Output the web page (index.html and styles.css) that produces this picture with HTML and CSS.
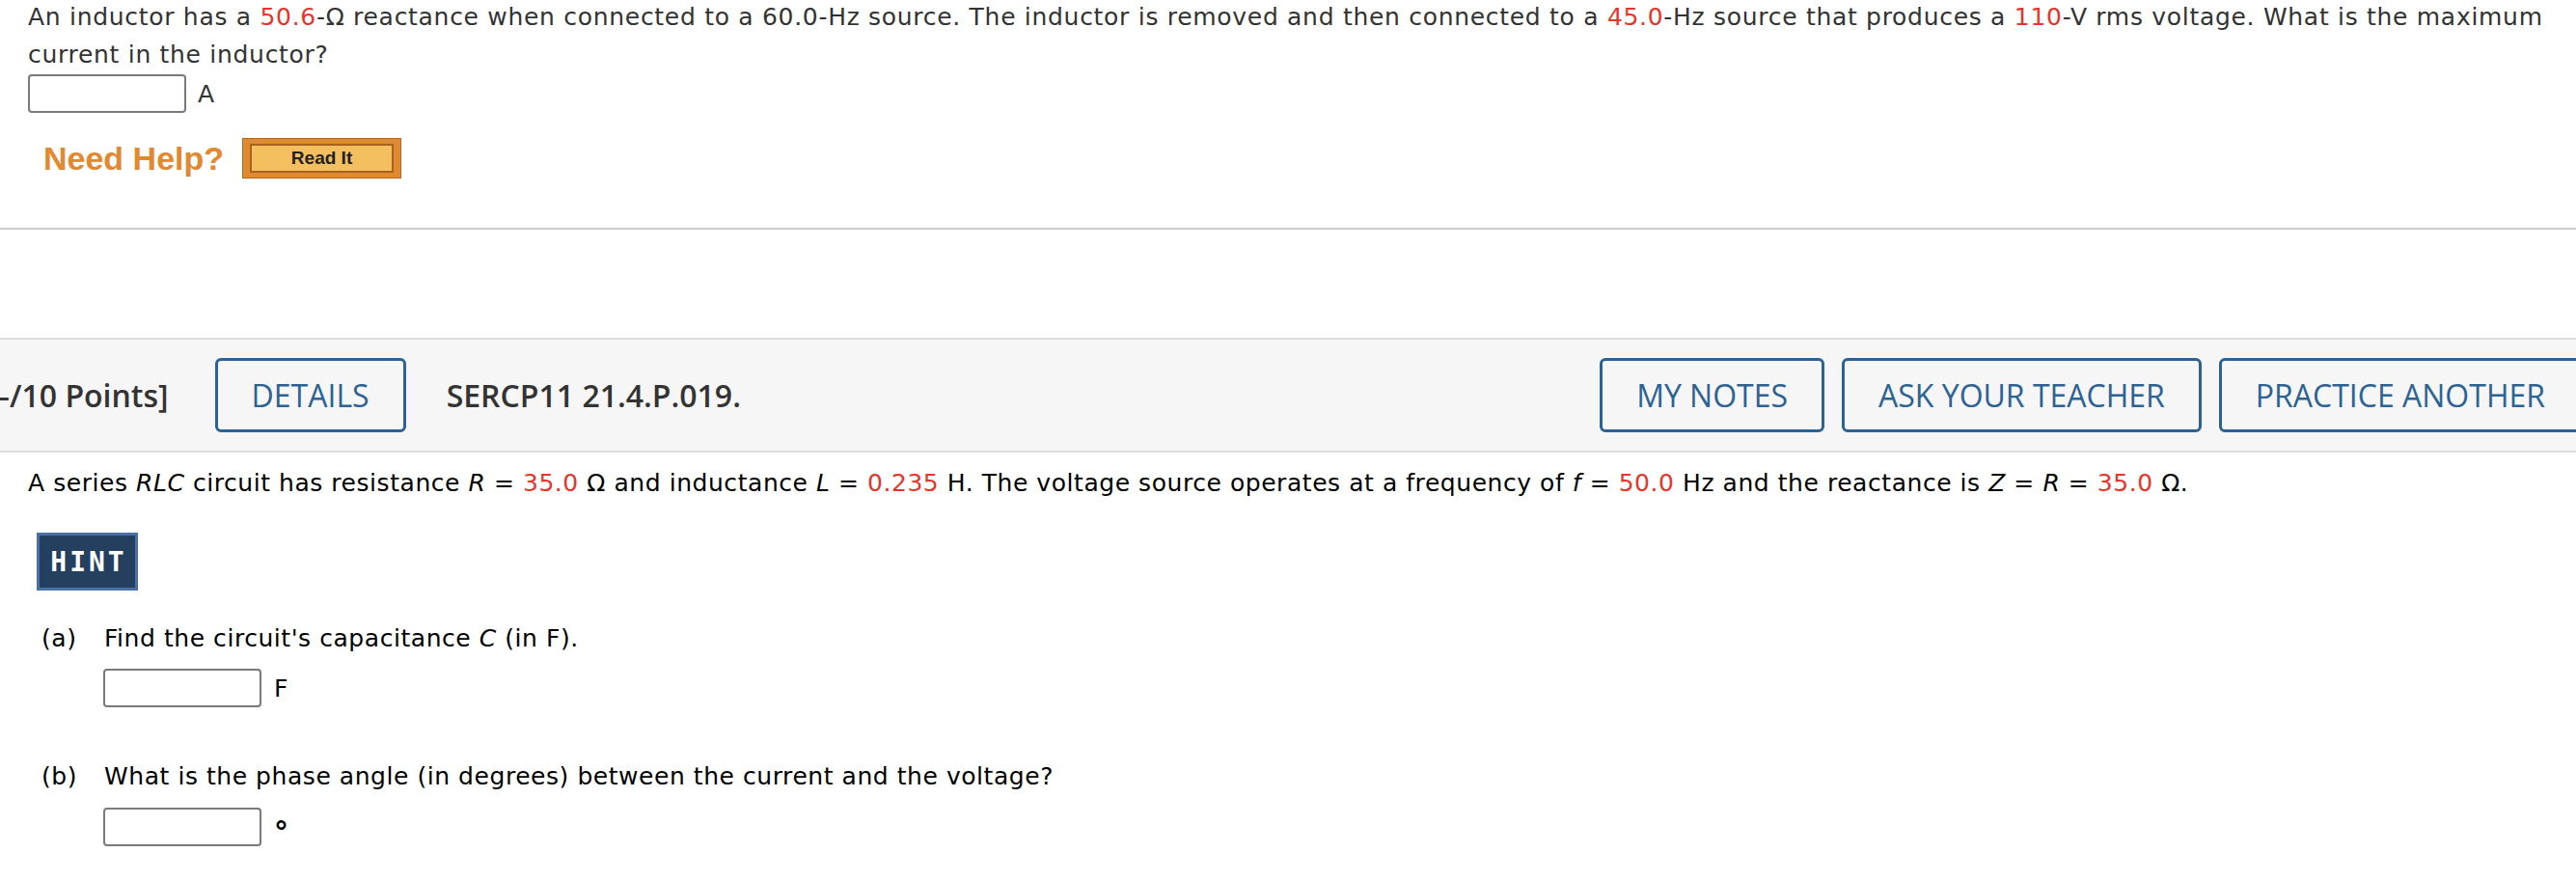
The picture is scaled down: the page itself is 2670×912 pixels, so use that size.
FILE: index.html
```html
<!DOCTYPE html>
<html>
<head>
<meta charset="utf-8">
<link rel="stylesheet" href="styles.css">
</head>
<body>
<section class="q1">
  <p class="stem">An inductor has a <span class="red">50.6</span>-Ω reactance when connected to a 60.0-Hz source. The inductor is removed and then connected to a <span class="red">45.0</span>-Hz source that produces a <span class="red">110</span>-V rms voltage. What is the maximum current in the inductor?</p>
  <div class="answer-row">
    <span class="box"></span><span class="unit">A</span>
  </div>
  <div class="help-row">
    <span class="need-help">Need Help?</span>
    <span class="read-it"><span class="read-it-inner">Read It</span></span>
  </div>
</section>
<div class="sep"></div>
<header class="qhead">
  <span class="points">–/10 Points]</span>
  <span class="btn">DETAILS</span>
  <span class="code">SERCP11 21.4.P.019.</span>
  <div class="right-group">
    <span class="btn">MY NOTES</span>
    <span class="btn">ASK YOUR TEACHER</span>
    <span class="btn">PRACTICE ANOTHER</span>
  </div>
</header>
<section class="q2">
  <p class="stem2">A series <i>RLC</i> circuit has resistance <i>R</i> = <span class="red">35.0</span> Ω and inductance <i>L</i> = <span class="red">0.235</span> H. The voltage source operates at a frequency of <i>f</i> = <span class="red">50.0</span> Hz and the reactance is <i>Z</i> = <i>R</i> = <span class="red">35.0</span> Ω.</p>
  <div class="hint">HINT</div>
  <div class="part part-a">
    <div class="part-q"><span class="label">(a)</span><span>Find the circuit's capacitance <i>C</i> (in F).</span></div>
    <div class="part-ans"><span class="box"></span><span class="unit">F</span></div>
  </div>
  <div class="part part-b">
    <div class="part-q"><span class="label">(b)</span><span>What is the phase angle (in degrees) between the current and the voltage?</span></div>
    <div class="part-ans"><span class="box"></span><span class="unit deg">°</span></div>
  </div>
</section>
</body>
</html>
```
FILE: styles.css
```css
html, body {
  margin: 0;
  padding: 0;
  background: #ffffff;
}
body {
  width: 2670px;
  overflow: hidden;
  font-family: "DejaVu Sans", Verdana, sans-serif;
  font-size: 25px;
  letter-spacing: 0.55px;
  color: #333333;
}
.red {
  color: #e8352a;
}
.q1 {
  padding: 0 29px;
}
.stem {
  margin: -2px 0 0 0;
  line-height: 39px;
  letter-spacing: 0.7px;
}
.answer-row {
  display: flex;
  align-items: center;
  gap: 12px;
  margin-top: 1px;
}
.box {
  display: inline-block;
  width: 164px;
  height: 40px;
  box-sizing: border-box;
  border: 2px solid #7a7a7a;
  border-radius: 4px;
  background: #fff;
}
.help-row {
  display: flex;
  align-items: center;
  gap: 19px;
  margin-top: 26px;
  padding-left: 16px;
  letter-spacing: 0;
}
.need-help {
  font-family: "Liberation Sans", Arial, sans-serif;
  font-weight: bold;
  font-size: 34px;
  color: #e2882f;
}
.read-it {
  display: inline-flex;
  box-sizing: border-box;
  width: 165px;
  height: 42px;
  padding: 5px 7px;
  background: #e08a2f;
  border: 1px solid #b5661f;
}
.read-it-inner {
  flex: 1;
  display: flex;
  align-items: center;
  justify-content: center;
  background: #f3bf5f;
  border: 2px solid #a8621f;
  font-family: "Liberation Sans", Arial, sans-serif;
  font-weight: bold;
  font-size: 19px;
  color: #222;
}
.sep {
  height: 2px;
  background: #cccccc;
  margin-top: 51px;
}
.qhead {
  margin-top: 112px;
  margin-right: -6px;
  display: flex;
  align-items: center;
  background: #f6f6f6;
  border-top: 2px solid #dddddd;
  border-bottom: 2px solid #dddddd;
  padding: 19px 0;
  font-family: "Open Sans", sans-serif;
  font-size: 32px;
  letter-spacing: 0;
}
.points {
  margin-left: -6px;
  font-weight: 600;
  color: #333;
}
.code {
  font-weight: 600;
  color: #333;
  margin-left: 42px;
}
.btn {
  display: inline-flex;
  align-items: center;
  height: 77px;
  box-sizing: border-box;
  padding: 0 35px;
  border: 3px solid #2c6394;
  border-radius: 6px;
  color: #2c6394;
  white-space: nowrap;
}
.points + .btn {
  margin-left: 48px;
}
.right-group {
  margin-left: auto;
  display: flex;
  gap: 18px;
}
.q2 {
  padding: 0 29px;
  color: #000;
}
.stem2 {
  margin: 12px 0 0 0;
  line-height: 39px;
}
.hint {
  margin: 32px 0 0 9px;
  width: 105px;
  height: 60px;
  box-sizing: border-box;
  border: 3px solid #4a70a6;
  background: #253f5f;
  color: #fff;
  display: flex;
  align-items: center;
  justify-content: center;
  font-family: "DejaVu Sans Mono", monospace;
  font-weight: bold;
  font-size: 28px;
  letter-spacing: 3px;
  padding-left: 3px;
}
.part {
  padding-left: 14px;
}
.part-q {
  display: flex;
  line-height: 39px;
}
.label {
  width: 65px;
  flex: none;
}
.part-a {
  margin-top: 30px;
}
.part-b {
  margin-top: 52px;
}
.part-ans {
  display: flex;
  align-items: center;
  gap: 13px;
  margin-left: 64px;
  margin-top: 12px;
}
.part-b .part-ans {
  margin-top: 9px;
}
.deg {
  font-size: 30px;
  font-weight: bold;
  padding-top: 12px;
}
```
